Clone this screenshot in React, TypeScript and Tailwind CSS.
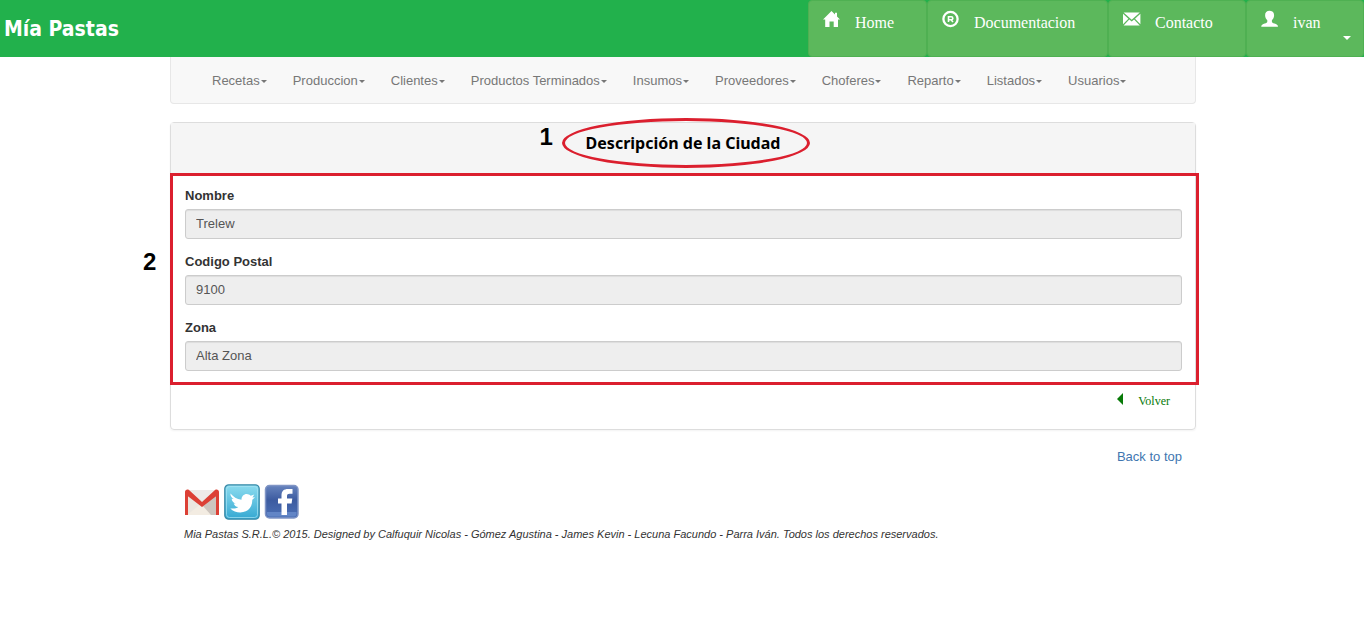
import React from "react";

const menu = [
  "Recetas",
  "Produccion",
  "Clientes",
  "Productos Terminados",
  "Insumos",
  "Proveedores",
  "Choferes",
  "Reparto",
  "Listados",
  "Usuarios",
];

const fields = [
  { id: "nombre", label: "Nombre", value: "Trelew" },
  { id: "codigo", label: "Codigo Postal", value: "9100" },
  { id: "zona", label: "Zona", value: "Alta Zona" },
];

function HomeIcon() {
  return (
    <svg viewBox="0 0 18 18" className="size-[18px]" fill="currentColor" aria-hidden="true">
      <path d="M8.500 1 12 4.400V2.700h2v3.700L17 9.500h-2V17h-4.300v-5.500H6.500V17H2.200V9.500H0Z" />
    </svg>
  );
}

function RegisteredIcon() {
  return (
    <svg viewBox="0 0 18 18" className="size-[18px]" fill="none" stroke="currentColor" aria-hidden="true">
      <circle cx="8.500" cy="9" r="7.100" strokeWidth="2.300" />
      <path d="M6.500 12V6.800h2.800a1.500 1.500 0 0 1 0 3H6.500M9 9.800l2 2.200" strokeWidth="1.600" />
    </svg>
  );
}

function MailIcon() {
  return (
    <svg viewBox="0 0 18 18" className="size-[18px]" fill="currentColor" aria-hidden="true">
      <path d="M.6 2.400h16.200L8.700 9.700ZM0 3.800 5.400 8.700 0 14.300ZM17.400 3.800v10.500L12 8.700ZM6.300 9.500 8.700 11.600l2.400-2.100 5.700 6H.6Z" />
    </svg>
  );
}

function UserIcon() {
  return (
    <svg viewBox="0 0 18 18" className="size-[18px]" fill="currentColor" aria-hidden="true">
      <path d="M8.600.8c2.900 0 4.500 1.700 4.500 4.400 0 2.200-1 4-2.200 5v1.500c0 .8 1 1.200 2.600 1.900 2 .8 3.500 1.300 3.500 3.200H.2c0-1.900 1.500-2.400 3.500-3.200 1.600-.7 2.600-1.100 2.600-1.900v-1.500c-1.200-1-2.200-2.800-2.200-5C4.100 2.500 5.700.8 8.600.8Z" />
    </svg>
  );
}

function Caret({ large = false }: { large?: boolean }) {
  return (
    <svg viewBox="0 0 8 4" className={large ? "h-1 w-2" : "h-[3px] w-1.5"} fill="currentColor" aria-hidden="true">
      <path d="M0 0h8L4 4Z" />
    </svg>
  );
}

function GmailLogo() {
  return (
    <svg viewBox="0 0 36 36" className="size-9" aria-hidden="true">
      <path d="M2 6h32v25H2Z" fill="#ebe6df" />
      <path d="M3 31 18 19l15 12Z" fill="#f3ece2" />
      <path d="m18 21 14-12v22H27Z" fill="#cdc5be" />
      <path d="M4 6h28L18 17Z" fill="#eeebe8" />
      <path d="M2.500 31V9M33.500 31V9" fill="none" stroke="#dc4035" strokeWidth="3" />
      <path d="M1 8c0-2 2-3 4-2l13 12L31 6c2-1 4 0 4 2v2L18 23 1 10Z" fill="#dc4035" />
    </svg>
  );
}

function TwitterLogo() {
  return (
    <svg viewBox="0 0 36 36" className="size-9" aria-hidden="true">
      <defs>
        <linearGradient id="sky" x1="0" y1="0" x2="0" y2="1">
          <stop offset="0" stopColor="#8cdcef" />
          <stop offset="1" stopColor="#35a8d2" />
        </linearGradient>
      </defs>
      <rect x=".8" y=".8" width="34.400" height="34.400" rx="4" fill="url(#sky)" stroke="#3a8aa8" strokeWidth="1.300" />
      <rect x="2.500" y="2.500" width="31" height="31" rx="3" fill="none" stroke="#a8e4f3" strokeWidth=".7" />
      <path d="M6.500 9.500c3 3.500 6 5.500 11 6.300-.2-3.300 2.200-5.900 5.200-5.900 1.700 0 3 .7 4 1.800l3.600-1.200-1.900 3 2.600-.3-2.700 2.500c.1 8-5 12.700-12 12.700-3.800 0-7.500-1.500-10-4 3.500.5 6 .1 8-1.300-2.500-.3-4-1.700-4.600-3.600h2c-2.600-.9-4-2.500-4-4.700l2 .3C7.300 13.300 6.200 11.500 6.500 9.500Z" fill="#fff" />
    </svg>
  );
}

function FacebookLogo() {
  return (
    <svg viewBox="0 0 36 36" className="size-9" aria-hidden="true">
      <defs>
        <linearGradient id="navy" x1="0" y1="0" x2="0" y2="1">
          <stop offset="0" stopColor="#6683bd" />
          <stop offset=".45" stopColor="#3c5ba0" />
          <stop offset="1" stopColor="#4c70b6" />
        </linearGradient>
      </defs>
      <rect x="1.500" y="1.500" width="32.500" height="32.500" rx="4" fill="url(#navy)" stroke="#8095c5" strokeWidth="1.500" />
      <path d="M3 28h29.500v2c0 1.500-1 2.500-2.500 2.500H5.500C4 32.500 3 31.500 3 30Z" fill="#6285c6" />
      <path d="M17.500 31V19.500H14v-5h3.500v-3c0-4.500 2.400-6.500 6.500-6.500h4.500v4.700h-3c-1.700 0-2.500.7-2.500 2.300v2.500h5.300l-.7 5H23V31Z" fill="#fff" />
    </svg>
  );
}

function TopButton({ icon, label, className }: { icon: React.ReactNode; label: string; className: string }) {
  return (
    <a
      href="#"
      className={`flex items-start gap-3.5 rounded border border-[#4fb052] bg-[#5cb85c] pt-[9px] pl-3.5 font-['Liberation_Serif',serif] text-[16px] leading-[26px] text-white ${className}`}
    >
      {icon}
      <span>{label}</span>
    </a>
  );
}

export default function App() {
  return (
    <div className="min-h-screen bg-white font-['Liberation_Sans',sans-serif] text-[13px] text-[#333]">
      <header className="flex h-[57px] justify-between bg-[#22b14c]">
        <a href="#" className="self-center pt-0.5 pl-1 font-['DejaVu_Sans_Condensed','DejaVu_Sans',sans-serif] text-[21px] font-bold text-white">
          Mía Pastas
        </a>
        <nav className="flex">
          <TopButton icon={<HomeIcon />} label="Home" className="w-[119px]" />
          <TopButton icon={<RegisteredIcon />} label="Documentacion" className="w-[181px]" />
          <TopButton icon={<MailIcon />} label="Contacto" className="w-[138px]" />
          <button
            type="button"
            className="flex w-[118px] items-start gap-3.5 rounded border border-[#4fb052] bg-[#5cb85c] pt-[9px] pl-3.5 font-['Liberation_Serif',serif] text-[16px] leading-[26px] text-white"
          >
            <UserIcon />
            <span>ivan</span>
            <span className="mr-3 ml-auto flex pt-[26px]">
              <Caret large />
            </span>
          </button>
        </nav>
      </header>

      <div className="pl-0.5">
        <div className="mx-auto max-w-[1026px]">
          <nav className="flex h-[47px] items-center rounded-b-sm border border-t-0 border-[#e7e7e7] bg-[#f8f8f8] px-[41px] pt-0.5 text-[#777]">
            <ul className="flex gap-[26px]">
              {menu.map((item) => (
                <li key={item}>
                  <a href="#" className="flex items-center gap-px whitespace-nowrap">
                    {item}
                    <Caret />
                  </a>
                </li>
              ))}
            </ul>
          </nav>

          <main className="mt-[18px] rounded border border-[#ddd] shadow-xs">
            <div className="flex h-[51px] justify-center border-b border-[#ddd] bg-[#f5f5f5] pt-2">
              <h1 className="relative h-6 font-['Noto_Sans',sans-serif] text-[16px] leading-6 font-bold text-black">
                Descripción de la Ciudad
                <span className="absolute -top-[13px] -left-6 h-[50px] w-[248px] rounded-[50%] border-3 border-[#db1f2e]" />
                <span className="absolute -top-2 -left-[46px] font-['Liberation_Sans',sans-serif] text-[24px] leading-7">1</span>
              </h1>
            </div>

            <form className="relative pt-[13px] pr-[13px] pb-3 pl-3.5">
              <div className="pointer-events-none absolute -top-px -right-1 -bottom-0.5 -left-px border-3 border-[#db1f2e]" />
              <span className="absolute top-[74px] -left-7 text-[24px] leading-7 font-bold text-black">2</span>
              <div className="flex flex-col gap-3.5">
                {fields.map((f) => (
                  <div key={f.id}>
                    <label htmlFor={f.id} className="mb-1 block leading-[18px] font-bold">
                      {f.label}
                    </label>
                    <input
                      id={f.id}
                      defaultValue={f.value}
                      readOnly
                      className="block h-[30px] w-full rounded-[3px] border border-[#ccc] bg-[#eee] px-2.5 pb-0.5 text-[#555] shadow-[inset_0_1px_1px_rgba(0,0,0,0.075)] outline-none"
                    />
                  </div>
                ))}
              </div>
            </form>

            <div className="flex h-[46px] justify-end pt-2 pr-[25px]">
              <a href="#" className="flex h-5 items-start gap-3.5 font-['Liberation_Serif',serif] text-[12px] leading-5 text-[#087a08]">
                <svg viewBox="0 0 7 16" className="h-4 w-[7px]" fill="currentColor" aria-hidden="true">
                  <path d="M6 2v12L0 8Z" />
                </svg>
                Volver
              </a>
            </div>
          </main>

          <footer className="px-3.5 pt-[17px]">
            <div className="flex justify-end">
              <a href="#" className="leading-5 text-[#3f76b0]">
                Back to top
              </a>
            </div>
            <div className="mt-[17px] flex gap-1">
              <a href="#" aria-label="Gmail">
                <GmailLogo />
              </a>
              <a href="#" aria-label="Twitter">
                <TwitterLogo />
              </a>
              <a href="#" aria-label="Facebook">
                <FacebookLogo />
              </a>
            </div>
            <p className="mt-1.5 text-[11px] leading-4 italic">
              Mia Pastas S.R.L.© 2015. Designed by Calfuquir Nicolas - Gómez Agustina - James Kevin - Lecuna Facundo - Parra Iván. Todos los derechos reservados.
            </p>
          </footer>
        </div>
      </div>
    </div>
  );
}
